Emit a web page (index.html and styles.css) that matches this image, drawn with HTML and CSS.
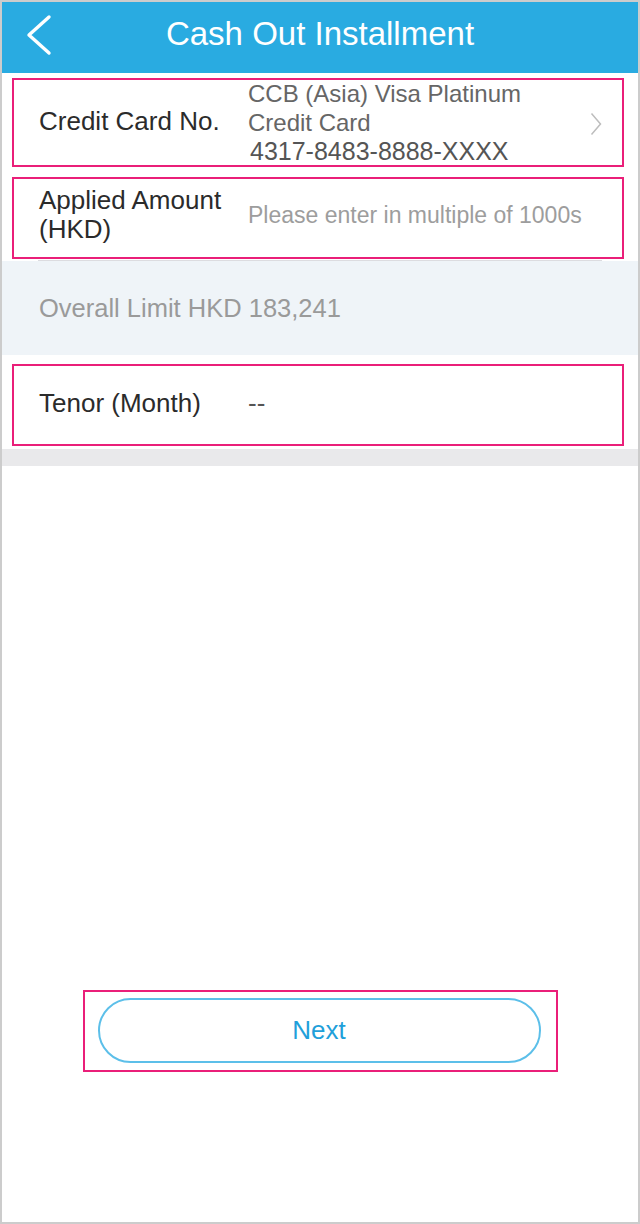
FILE: index.html
```html
<!DOCTYPE html>
<html lang="en">
<head>
    <meta charset="UTF-8">
    <meta name="viewport" content="width=device-width, initial-scale=1.0">
    <title>Cash Out Installment</title>
    <link rel="stylesheet" href="styles.css">
</head>
<body>
    <div class="screen">
        <header class="topbar">
            <a href="#" class="back-btn" aria-label="Back">
                <svg width="26" height="42" viewBox="0 0 26 42">
                    <polyline points="23,3 3,21 23,39" fill="none" stroke="#fff" stroke-width="3.4" stroke-linecap="round" stroke-linejoin="round"/>
                </svg>
            </a>
            <h1>Cash Out Installment</h1>
        </header>

        <div class="form">
            <div class="field mark field-card">
                <div class="field-label">Credit Card No.</div>
                <div class="field-value card-value">
                    <div>CCB (Asia) Visa Platinum</div>
                    <div>Credit Card</div>
                    <div class="card-number">4317-8483-8888-XXXX</div>
                </div>
                <svg class="chevron" width="12" height="24" viewBox="0 0 12 24">
                    <polyline points="1.5,1.5 10.5,12 1.5,22.5" fill="none" stroke="#bdbdbd" stroke-width="1.5"/>
                </svg>
            </div>

            <div class="field mark field-amount">
                <div class="field-label">Applied Amount<br>(HKD)</div>
                <input type="text" class="amount-input" placeholder="Please enter in multiple of 1000s">
            </div>

            <div class="divider"></div>

            <div class="limit-band">Overall Limit HKD 183,241</div>

            <div class="field mark field-tenor">
                <div class="field-label">Tenor (Month)</div>
                <div class="field-value tenor-value">--</div>
            </div>

            <div class="bottom-band"></div>
        </div>

        <div class="actions">
            <div class="mark action-mark">
                <button class="btn-next">Next</button>
            </div>
        </div>
    </div>
</body>
</html>
```

FILE: styles.css
```css
body {
    margin: 0;
    padding: 0;
    font-family: "Liberation Sans", Arial, sans-serif;
    background-color: #fff;
    color: #2b2b2b;
}

.screen {
    width: 640px;
    height: 1224px;
    box-sizing: border-box;
    border: 2px solid #cccccc;
    display: flex;
    flex-direction: column;
    background-color: #fff;
}

.topbar {
    height: 71px;
    box-sizing: border-box;
    padding-bottom: 7px;
    background-color: #29abe1;
    display: grid;
    grid-template-columns: 72px 1fr 72px;
    align-items: center;
}

.back-btn {
    display: block;
    align-self: start;
    margin-top: 12px;
    margin-left: 24px;
    width: 26px;
    height: 42px;
}

.back-btn svg {
    display: block;
}

.topbar h1 {
    margin: 0;
    font-size: 33px;
    font-weight: normal;
    color: #fff;
    text-align: center;
}

/* pink highlight frames */
.mark {
    border: 2px solid #ea1f79;
}

.field {
    margin: 0 14px 0 10px;
    padding-left: 25px;
    display: grid;
    grid-template-columns: 209px 1fr auto;
    align-items: center;
    box-sizing: border-box;
}

.field-card {
    margin-top: 5px;
    height: 89px;
}

.field-amount {
    margin-top: 10px;
    height: 82px;
}

.field-tenor {
    margin-top: 9px;
    height: 82px;
}

.field-label {
    font-size: 26px;
    line-height: 29px;
    color: #2b2b2b;
}

.field-card .field-label {
    margin-bottom: 8px;
}

.field-amount .field-label {
    margin-bottom: 6px;
}

.field-tenor .field-label,
.field-tenor .field-value {
    margin-bottom: 3px;
}

.field-value {
    color: #666;
}

.card-value {
    font-size: 24px;
    line-height: 28.5px;
    margin-bottom: 6px;
}

.card-number {
    font-size: 25px;
    color: #555;
    padding-left: 2px;
}

.chevron {
    display: block;
    margin-right: 20px;
    margin-bottom: 4px;
}

.amount-input {
    grid-column: 2 / 4;
    border: none;
    outline: none;
    padding: 0;
    margin-bottom: 6px;
    font-family: inherit;
    font-size: 23px;
    color: #333;
    background: transparent;
    width: 100%;
}

.amount-input::placeholder {
    color: #9d9d9d;
}

.tenor-value {
    font-size: 26px;
    color: #555;
}

.divider {
    height: 1px;
    margin: 1px 36px 0;
    background-color: #dcdce0;
}

.limit-band {
    height: 94px;
    box-sizing: border-box;
    padding-left: 37px;
    display: flex;
    align-items: center;
    background-color: #eff4f8;
    font-size: 25.5px;
    color: #9a9a9a;
}

.bottom-band {
    height: 17px;
    margin-top: 3px;
    background-color: #e9e9eb;
}

.actions {
    margin-top: auto;
    padding-bottom: 150px;
}

.action-mark {
    width: 475px;
    box-sizing: border-box;
    margin: 0 auto;
    padding: 6px 15px 7px 13px;
}

.btn-next {
    display: block;
    width: 100%;
    height: 65px;
    border: 2px solid #5cbfe9;
    border-radius: 33px;
    background-color: #fff;
    font-family: inherit;
    font-size: 26px;
    color: #1fa0da;
    cursor: pointer;
}
```
